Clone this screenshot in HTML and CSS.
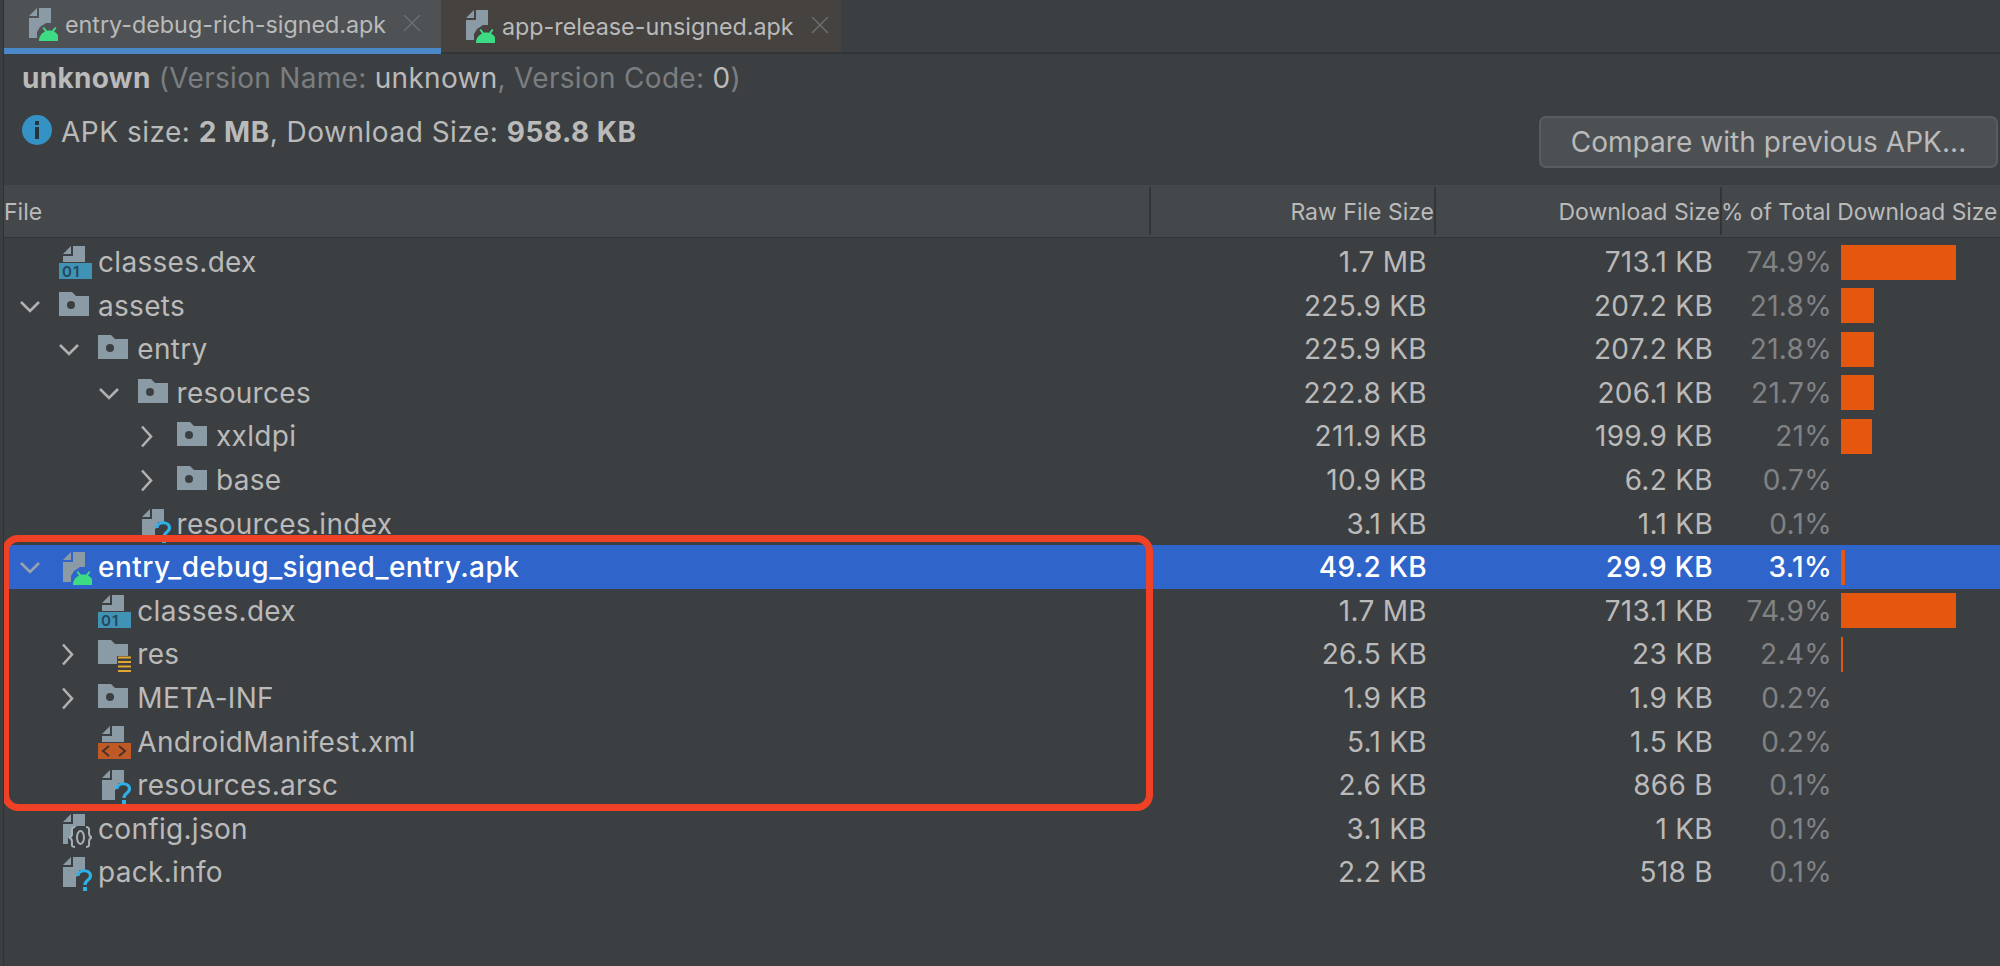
FILE: index.html
```html
<!DOCTYPE html>
<html lang="en">
<head>
<meta charset="utf-8">
<title>APK Analyzer</title>
<link rel="stylesheet" href="styles.css">
</head>
<body>
<svg class="defs" width="0" height="0" aria-hidden="true">
  <symbol id="i-folder" viewBox="0 0 34 44">
    <path fill="#8a9ba6" d="M1 8h13l4 4h13v20H1z"/>
    <circle cx="13" cy="21" r="4" fill="#3c3f41"/>
  </symbol>
  <symbol id="i-res" viewBox="0 0 34 44">
    <path fill="#8a9ba6" d="M1 8h13l4 4h13v12H20v8H1z"/>
    <path stroke="#e2a634" stroke-width="2" d="M21 25.500h13M21 30h13M21 34.500h13M21 39h13"/>
  </symbol>
  <symbol id="i-dex" viewBox="0 0 34 44">
    <path fill="#8a9ba6" d="M5 14l8-8v8zM15 6h12v16H5v-6h10z"/>
    <path fill="#4193b5" d="M1 23h33v16H1z"/>
  </symbol>
  <symbol id="i-xml" viewBox="0 0 34 44">
    <path fill="#8a9ba6" d="M5 14l8-8v8zM15 6h12v16H5v-6h10z"/>
    <path fill="#bf5a26" d="M1 23h33v16H1z"/>
    <path fill="none" stroke="#4a3028" stroke-width="2" d="M12 26l-6 5 6 5M22 26l6 5-6 5"/>
  </symbol>
  <symbol id="i-question" viewBox="0 0 34 44">
    <path fill="#8a9ba6" d="M5 15l8-8v8zM15 7h12v13h-6v5l-3 2v10H5V17h10z"/>
    <path fill="none" stroke="#2fb0e6" stroke-width="3.200" d="M20 26c0-7 12.500-7 12.500 0 0 4.500-5.500 3.500-5.500 9"/>
    <rect x="25" y="37" width="4" height="4" fill="#2fb0e6"/>
  </symbol>
  <symbol id="i-json" viewBox="0 0 34 44">
    <path fill="#8a9ba6" d="M5 15l8-8v8zM15 7h12v12h-8l-4 3v7l-5 2v6H5V17h10z"/>
    <path fill="none" stroke="#a6b0b6" stroke-width="2" d="M17 20c-4 0-3 3-3 6 0 3-1 4-3 4.500 2 .5 3 1.500 3 4.500 0 3-1 5 3 5M28 20c4 0 3 3 3 6 0 3 1 4 3 4.500-2 .5-3 1.500-3 4.500 0 3 1 5-3 5"/>
    <ellipse cx="22.500" cy="30.500" rx="3.500" ry="6.500" fill="none" stroke="#a6b0b6" stroke-width="2"/>
  </symbol>
  <symbol id="i-apk" viewBox="0 0 34 44">
    <path fill="#8a9ba6" d="M5 15l8-8v8zM15 7h12v15h-5l-6 4-3 5v6H5V17h10z"/>
    <path fill="#3ddc84" d="M15 40c0-5 3-8 6-9.500l-2.500-3.500 1.500-1 3 3.800c1.500-.5 3.500-.5 5 0l3-3.800 1.500 1-2.500 3.500c3 1.500 5.500 4.500 5.500 9.500z"/>
  </symbol>
  <symbol id="i-down" viewBox="0 0 24 44">
    <path fill="none" stroke="currentColor" stroke-width="2.600" d="M5 18l9 9 9-9"/>
  </symbol>
  <symbol id="i-right" viewBox="0 0 24 44">
    <path fill="none" stroke="currentColor" stroke-width="2.600" d="M8 12.500l9 10-9 10"/>
  </symbol>
  <symbol id="i-close" viewBox="0 0 18 16">
    <path fill="none" stroke="currentColor" stroke-width="1.400" d="M1 0l16 16M17 0L1 16"/>
  </symbol>
</svg>

<div class="app">
  <div class="tabs">
    <div class="tab tab-active">
      <svg class="tab-icon"><use href="#i-apk"/></svg>
      <span class="tab-label">entry-debug-rich-signed.apk</span>
      <svg class="tab-close"><use href="#i-close"/></svg>
    </div>
    <div class="tab tab-idle">
      <svg class="tab-icon"><use href="#i-apk"/></svg>
      <span class="tab-label">app-release-unsigned.apk</span>
      <svg class="tab-close"><use href="#i-close"/></svg>
    </div>
  </div>

  <div class="summary">
    <div class="summary-text">
      <div class="title"><b>unknown</b> <span class="dim">(Version Name:</span> unknown<span class="dim">, Version Code:</span> 0<span class="dim">)</span></div>
      <div class="sizes">
        <svg class="info" viewBox="0 0 30 30"><circle cx="15" cy="15" r="15" fill="#3592c4"/><rect x="13" y="6" width="4" height="4" fill="#26343c"/><rect x="13" y="12" width="4" height="12" fill="#26343c"/></svg>
        <span class="sizes-text">APK size: <b>2 MB</b>, Download Size: <b>958.8 KB</b></span>
      </div>
    </div>
    <button class="compare">Compare with previous APK...</button>
  </div>

  <div class="head">
    <div class="head-cell head-file">File</div>
    <div class="head-cell">Raw File Size</div>
    <div class="head-cell">Download Size</div>
    <div class="head-cell head-total">% of Total Download Size</div>
  </div>

  <div class="tree">
    <div class="row"><div class="name l0"><span class="chev"></span><svg class="icon" viewBox="0 0 34 44"><use href="#i-dex"/><text x="4" y="37" class="glyph01">01</text></svg><span>classes.dex</span></div><div class="num">1.7 MB</div><div class="num">713.1 KB</div><div class="share"><span class="pct">74.9%</span><i class="bar" style="width:115px"></i></div></div>
    <div class="row"><div class="name l0"><svg class="chev"><use href="#i-down"/></svg><svg class="icon"><use href="#i-folder"/></svg><span>assets</span></div><div class="num">225.9 KB</div><div class="num">207.2 KB</div><div class="share"><span class="pct">21.8%</span><i class="bar" style="width:33px"></i></div></div>
    <div class="row"><div class="name l1"><svg class="chev"><use href="#i-down"/></svg><svg class="icon"><use href="#i-folder"/></svg><span>entry</span></div><div class="num">225.9 KB</div><div class="num">207.2 KB</div><div class="share"><span class="pct">21.8%</span><i class="bar" style="width:33px"></i></div></div>
    <div class="row"><div class="name l2"><svg class="chev"><use href="#i-down"/></svg><svg class="icon"><use href="#i-folder"/></svg><span>resources</span></div><div class="num">222.8 KB</div><div class="num">206.1 KB</div><div class="share"><span class="pct">21.7%</span><i class="bar" style="width:33px"></i></div></div>
    <div class="row"><div class="name l3"><svg class="chev"><use href="#i-right"/></svg><svg class="icon"><use href="#i-folder"/></svg><span>xxldpi</span></div><div class="num">211.9 KB</div><div class="num">199.9 KB</div><div class="share"><span class="pct">21%</span><i class="bar" style="width:31px"></i></div></div>
    <div class="row"><div class="name l3"><svg class="chev"><use href="#i-right"/></svg><svg class="icon"><use href="#i-folder"/></svg><span>base</span></div><div class="num">10.9 KB</div><div class="num">6.2 KB</div><div class="share"><span class="pct">0.7%</span></div></div>
    <div class="row"><div class="name l2"><span class="chev"></span><svg class="icon"><use href="#i-question"/></svg><span>resources.index</span></div><div class="num">3.1 KB</div><div class="num">1.1 KB</div><div class="share"><span class="pct">0.1%</span></div></div>
    <div class="row selected"><div class="name l0"><svg class="chev"><use href="#i-down"/></svg><svg class="icon"><use href="#i-apk"/></svg><span>entry_debug_signed_entry.apk</span></div><div class="num">49.2 KB</div><div class="num">29.9 KB</div><div class="share"><span class="pct">3.1%</span><i class="bar" style="width:4px"></i></div></div>
    <div class="row"><div class="name l1"><span class="chev"></span><svg class="icon" viewBox="0 0 34 44"><use href="#i-dex"/><text x="4" y="37" class="glyph01">01</text></svg><span>classes.dex</span></div><div class="num">1.7 MB</div><div class="num">713.1 KB</div><div class="share"><span class="pct">74.9%</span><i class="bar" style="width:115px"></i></div></div>
    <div class="row"><div class="name l1"><svg class="chev"><use href="#i-right"/></svg><svg class="icon"><use href="#i-res"/></svg><span>res</span></div><div class="num">26.5 KB</div><div class="num">23 KB</div><div class="share"><span class="pct">2.4%</span><i class="bar" style="width:2px"></i></div></div>
    <div class="row"><div class="name l1"><svg class="chev"><use href="#i-right"/></svg><svg class="icon"><use href="#i-folder"/></svg><span>META-INF</span></div><div class="num">1.9 KB</div><div class="num">1.9 KB</div><div class="share"><span class="pct">0.2%</span></div></div>
    <div class="row"><div class="name l1"><span class="chev"></span><svg class="icon"><use href="#i-xml"/></svg><span>AndroidManifest.xml</span></div><div class="num">5.1 KB</div><div class="num">1.5 KB</div><div class="share"><span class="pct">0.2%</span></div></div>
    <div class="row"><div class="name l1"><span class="chev"></span><svg class="icon"><use href="#i-question"/></svg><span>resources.arsc</span></div><div class="num">2.6 KB</div><div class="num">866 B</div><div class="share"><span class="pct">0.1%</span></div></div>
    <div class="row"><div class="name l0"><span class="chev"></span><svg class="icon"><use href="#i-json"/></svg><span>config.json</span></div><div class="num">3.1 KB</div><div class="num">1 KB</div><div class="share"><span class="pct">0.1%</span></div></div>
    <div class="row"><div class="name l0"><span class="chev"></span><svg class="icon"><use href="#i-question"/></svg><span>pack.info</span></div><div class="num">2.2 KB</div><div class="num">518 B</div><div class="share"><span class="pct">0.1%</span></div></div>
  </div>

  <div class="callout"></div>
</div>
</body>
</html>
```
FILE: styles.css
```css
* { box-sizing: border-box; }
html, body { margin: 0; height: 100%; overflow: hidden; }
body { background: #3c3f41; color: #bababa; font-family: Inter, "Liberation Sans", sans-serif; }
.defs { position: absolute; }
.glyph01 { font: 600 15px Inter, sans-serif; fill: #24465a; letter-spacing: 1px; }

.app { position: relative; height: 966px; border-left: 1px solid #303234; margin-left: 3px; display: flex; flex-direction: column; overflow: hidden; }

.tabs { display: flex; height: 54px; border-bottom: 2px solid #323537; }
.tab { display: flex; align-items: center; height: 52px; font-size: 23.300px; padding-left: 20px; }
.tab-active { width: 437px; background: #4e5254; height: 54px; border-bottom: 6px solid #4a88c7; }
.tab-idle { width: 400px; background: #45423f; }
.tab-icon { width: 34px; height: 44px; flex: none; margin-top: -2px; }
.tab-label { margin-left: 7px; }
.tab-close { width: 18px; height: 16px; margin-left: 17px; margin-top: -2px; flex: none; color: #6e7173; }

.summary { height: 131px; display: flex; justify-content: space-between; padding: 0 2px 0 18px; }
.summary-text { font-size: 28px; }
.title { height: 48px; padding-top: 9px; line-height: 30px; letter-spacing: 0.3px; }
.title b, .sizes b { font-weight: 700; color: #bababa; }
.dim { color: #7b7e80; }
.sizes { display: flex; align-items: center; gap: 9px; margin-top: 13px; height: 30px; }
.sizes-text { margin-top: 4px; letter-spacing: 0.5px; }
.info { width: 30px; height: 30px; flex: none; }
.compare { align-self: flex-end; margin-bottom: 17px; width: 459px; height: 52px; background: #4c5052; border: 2px solid #5a5d5f; border-radius: 7px; color: #bababa; font: 28px Inter, "Liberation Sans", sans-serif; padding: 0; letter-spacing: 0.05px; }

.head { display: grid; grid-template-columns: 1147px 285px 286px 1fr; height: 53px; margin-bottom: 2px; background: #45484a; border-bottom: 1px solid #323537; font-size: 23px; align-items: center; }
.head-cell { height: 48px; line-height: 50px; text-align: right; border-right: 2px solid #333638; white-space: nowrap; }
.head-file { text-align: left; }
.head-total { border-right: 0; text-align: left; font-size: 22.800px; margin-left: -1px; }

.row { display: grid; grid-template-columns: 1147px 285px 286px 1fr; height: 43.6px; align-items: center; font-size: 28px; letter-spacing: 0.3px; }
.selected { background: #2f65ca; color: #fff; font-weight: 500; letter-spacing: 0.45px; }
.name { display: flex; align-items: center; height: 100%; color: inherit; }
.l0 { padding-left: 12px; }
.l1 { padding-left: 51.300px; }
.l2 { padding-left: 90.600px; }
.l3 { padding-left: 130px; }
.chev { width: 24px; height: 44px; flex: none; margin-right: 18px; color: #afb1b3; }
.selected .chev { color: #9aa3ad; }
.icon { width: 34px; height: 44px; flex: none; margin-right: 6px; }
.num { text-align: right; padding-right: 9px; }
.selected .num, .selected .pct { letter-spacing: 0.3px; }
.share { display: flex; align-items: center; gap: 8.500px; height: 100%; }
.pct { width: 110px; text-align: right; color: #808284; }
.selected .pct { color: #fff; }
.bar { display: block; height: 35px; background: #e5570e; }

.callout { position: absolute; left: -2px; top: 535px; width: 1151px; height: 276px; border: 7px solid #ee4125; border-radius: 16px; pointer-events: none; }
```
